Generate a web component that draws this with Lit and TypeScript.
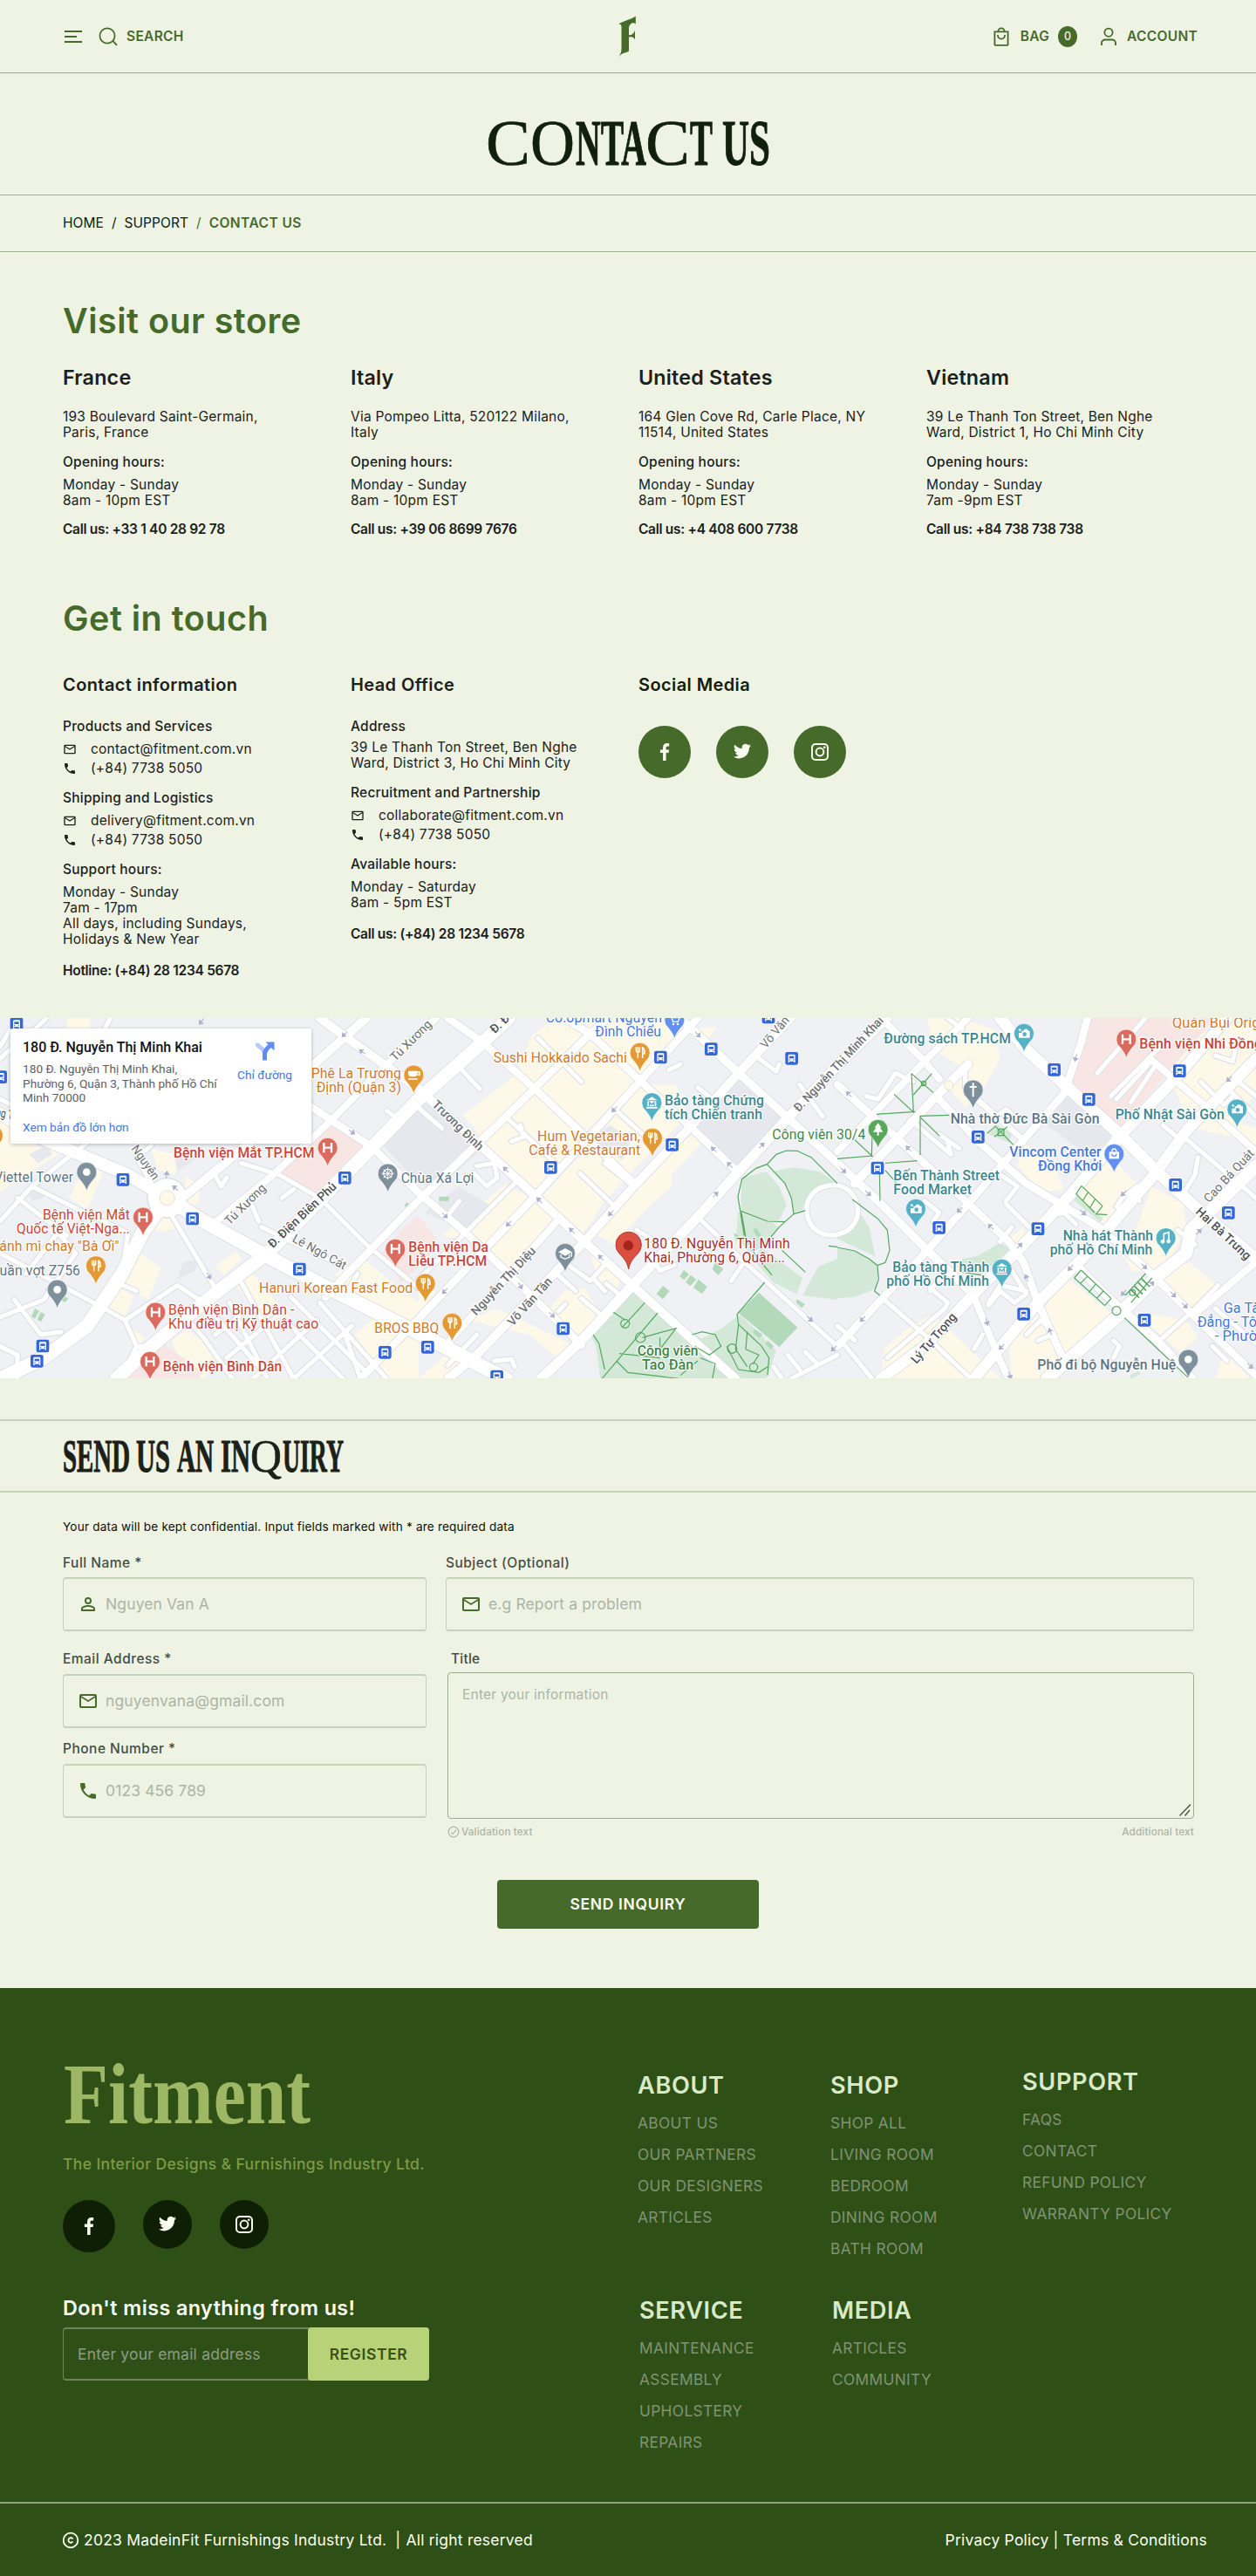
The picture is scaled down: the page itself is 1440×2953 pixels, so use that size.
import { LitElement, html, svg, css, nothing } from "lit";
import { customElement } from "lit/decorators.js";

const icon = {
  menu: svg`<path d="M2 6h20M2 12h14M2 18h20" stroke="currentColor" stroke-width="2"/>`,
  search: svg`<circle cx="11" cy="11" r="8.6" fill="none" stroke="currentColor" stroke-width="1.7"/><path d="M17.4 16.8 22 21.8" stroke="currentColor" stroke-width="1.9"/>`,
  bag: svg`<path d="M4.4 6.4h15.2v14.6a.8.8 0 0 1-.8.8H5.2a.8.8 0 0 1-.8-.8zM8.4 6.2a3.6 3.9 0 0 1 7.2 0M8 10v.6a4 4 0 0 0 8 0V10" fill="none" stroke="currentColor" stroke-width="1.8"/>`,
  account: svg`<circle cx="12" cy="7.2" r="4.6" fill="none" stroke="currentColor" stroke-width="1.8"/><path d="M4 22v-2.5a4 4 0 0 1 4-4h8a4 4 0 0 1 4 4V22" fill="none" stroke="currentColor" stroke-width="1.9"/>`,
  mail: svg`<path d="M20 4H4a2 2 0 0 0-2 2v12a2 2 0 0 0 2 2h16a2 2 0 0 0 2-2V6a2 2 0 0 0-2-2zm0 14H4V8l8 5 8-5zm-8-7L4 6h16z" fill="currentColor"/>`,
  phone: svg`<path d="M6.62 10.79a15.15 15.15 0 0 0 6.59 6.59l2.2-2.2a1 1 0 0 1 1.02-.24c1.12.37 2.33.57 3.57.57a1 1 0 0 1 1 1V20a1 1 0 0 1-1 1A17 17 0 0 1 3 4a1 1 0 0 1 1-1h3.5a1 1 0 0 1 1 1c0 1.25.2 2.45.57 3.57a1 1 0 0 1-.25 1.02z" fill="currentColor"/>`,
  person: svg`<path d="M12 5.9a2.1 2.1 0 1 1 0 4.2 2.1 2.1 0 0 1 0-4.2m0 9c2.97 0 6.1 1.46 6.1 2.1v1.1H5.9V17c0-.64 3.13-2.1 6.1-2.1M12 4a4 4 0 1 0 0 8 4 4 0 0 0 0-8m0 9c-2.67 0-8 1.34-8 4v3h16v-3c0-2.66-5.33-4-8-4" fill="currentColor"/>`,
  facebook: svg`<path d="M13.6 22v-9h3l.5-3.5h-3.5V7.4c0-1 .3-1.8 1.8-1.8h1.8V2.3C16.900 2.200 15.900 2 14.700 2c-2.800 0-4.600 1.700-4.600 4.700v2.800H6.900V13h3.200v9z" fill="currentColor"/>`,
  twitter: svg`<path d="M22 4.800c-.7.3-1.500.6-2.400.7.9-.5 1.500-1.300 1.800-2.300-.8.5-1.700.8-2.600 1A4.100 4.100 0 0 0 11.800 8 11.700 11.700 0 0 1 3.400 3.700a4.100 4.100 0 0 0 1.300 5.500c-.7 0-1.300-.2-1.900-.5v.1c0 2 1.400 3.600 3.300 4a4 4 0 0 1-1.900.1 4.100 4.100 0 0 0 3.900 2.900A8.300 8.300 0 0 1 2 17.500a11.700 11.700 0 0 0 6.300 1.900c7.600 0 11.900-6.400 11.600-12.100.8-.6 1.500-1.500 2.100-2.500z" fill="currentColor"/>`,
  instagram: svg`<rect x="3" y="3" width="18" height="18" rx="4" fill="none" stroke="currentColor" stroke-width="2"/><circle cx="12" cy="12" r="4.400" fill="none" stroke="currentColor" stroke-width="2"/><circle cx="17.200" cy="6.800" r="1.300" fill="currentColor"/>`,
  check: svg`<circle cx="12" cy="12" r="10" fill="none" stroke="currentColor" stroke-width="2"/><path d="m7 12.500 3.400 3.400L17.500 8" fill="none" stroke="currentColor" stroke-width="2"/>`,
  copyright: svg`<circle cx="12" cy="12" r="10" fill="none" stroke="currentColor" stroke-width="2.200"/><path d="M15 10.200A3.300 3.300 0 1 0 15 13.800" fill="none" stroke="currentColor" stroke-width="2.200"/>`,
};

const glyph = (shape: unknown, size = 24) =>
  html`<svg class="glyph" width=${size} height=${size} viewBox="0 0 24 24" fill="none">${shape}</svg>`;

/* ------------------------------------------------------------------ map */

const B = 1440;
const C = 2880;

const palette = {
  red: "#c9453a",
  orange: "#cf7a2c",
  slate: "#5c7585",
  teal: "#3b8791",
  blue: "#4676dc",
  green: "#3c8748",
  wine: "#a52f2a",
  street: "#6c6f74",
  avenue: "#4d5054",
};

type Label = [number, number, number, string, keyof typeof palette, number?, number?];

const labels: Label[] = [
  [1070, 227, 310, "Phê La Trương", "orange"],
  [1088, 275, 292, "Định (Quận 3)", "orange"],
  [597, 501, 485, "Bệnh viện Mắt TP.HCM", "red", 500],
  [-20, 585, 272, "Viettel Tower", "slate"],
  [147, 714, 300, "Bệnh viện Mắt", "red"],
  [57, 763, 390, "Quốc tế Việt-Nga...", "red"],
  [-32, 822, 442, "Bánh mì chay \"Bà Ơi\"", "orange"],
  [-34, 906, 310, "Quần vợt Z756", "slate"],
  [891, 967, 529, "Hanuri Korean Fast Food", "orange"],
  [579, 1042, 433, "Bệnh viện Bình Dân -", "red"],
  [579, 1090, 517, "Khu điều trị Kỹ thuật cao", "red"],
  [1288, 1103, 222, "BROS BBQ", "orange"],
  [560, 1235, 410, "Bệnh viện Bình Dân", "red", 500],
  [1405, 824, 275, "Bệnh viện Da", "red", 500],
  [1405, 873, 270, "Liễu TP.HCM", "red", 500],
  [1379, 588, 251, "Chùa Xá Lợi", "slate"],
  [B + 437, 36, 400, "Co.opmart Nguyễn", "blue"],
  [B + 607, 85, 227, "Đình Chiểu", "blue"],
  [B + 257, 174, 460, "Sushi Hokkaido Sachi", "orange"],
  [B + 846, 322, 342, "Bảo tàng Chứng", "teal", 500],
  [B + 846, 370, 336, "tích Chiến tranh", "teal", 500],
  [B + 408, 444, 354, "Hum Vegetarian,", "orange"],
  [B + 379, 491, 384, "Café & Restaurant", "orange"],
  [B + 1216, 438, 321, "Công viên 30/4", "green"],
  [B + 775, 812, 502, "180 Đ. Nguyễn Thị Minh", "wine"],
  [B + 775, 862, 485, "Khai, Phường 6, Quận...", "wine"],
  [B + 752, 1183, 210, "Công viên", "green", 500],
  [B + 768, 1231, 178, "Tao Đàn", "green", 500],
  [C + 160, 107, 437, "Đường sách TP.HCM", "teal", 500],
  [C + 1039, 127, 422, "Bệnh viện Nhi Đồng", "red", 500],
  [C + 1152, 53, 380, "Quán Bụi Original", "orange"],
  [C + 389, 384, 513, "Nhà thờ Đức Bà Sài Gòn", "slate", 500],
  [C + 956, 368, 376, "Phố Nhật Sài Gòn", "teal", 500],
  [C + 592, 497, 316, "Vincom Center", "blue", 500],
  [C + 690, 545, 220, "Đồng Khởi", "blue", 500],
  [C + 193, 580, 365, "Bến Thành Street", "teal", 500],
  [C + 193, 628, 269, "Food Market", "teal", 500],
  [C + 776, 787, 310, "Nhà hát Thành", "teal", 500],
  [C + 731, 835, 353, "phố Hồ Chí Minh", "teal", 500],
  [C + 190, 893, 333, "Bảo tàng Thành", "teal", 500],
  [C + 169, 941, 353, "phố Hồ Chí Minh", "teal", 500],
  [C + 1328, 1036, 152, "Ga Tàu", "blue"],
  [C + 1238, 1083, 232, "Đẳng - Tôn", "blue"],
  [C + 1298, 1131, 202, "- Phường", "blue"],
  [C + 688, 1229, 477, "Phố đi bộ Nguyễn Huệ", "slate", 500],
];

// x, y, length, text, color, weight, rotation
const streets: Label[] = [
  [450, 470, 135, "Nguyên", "street", 400, 55],
  [790, 735, 180, "Tú Xương", "street", 400, -45],
  [938, 814, 306, "Đ. Điện Biên Phủ", "avenue", 500, -43.5],
  [1003, 788, 205, "Lê Ngô Cát", "street", 400, 29],
  [1360, 172, 180, "Tú Xương", "street", 400, -45],
  [-55, 352, 100, "Hồng T", "avenue", 400, 10],
  [B + 44, 322, 226, "Trương Định", "street", 500, 44],
  [B + 262, 76, 306, "Đ. Điện Biên Phủ", "avenue", 500, -43.5],
  [B + 198, 1046, 304, "Nguyễn Thị Diệu", "street", 500, -47],
  [B + 324, 1082, 206, "Võ Văn Tần", "street", 500, -48],
  [B + 1194, 128, 206, "Võ Văn Tần", "street", 400, -50],
  [B + 1308, 346, 430, "Đ. Nguyễn Thị Minh Khai", "street", 500, -47],
  [C + 1278, 658, 232, "Cao Bá Quát", "street", 400, -47],
  [C + 1230, 690, 242, "Hai Bà Trưng", "avenue", 500, 43],
  [C + 272, 1212, 214, "Lý Tự Trọng", "avenue", 500, -49],
];

const pinColors: Record<string, string> = {
  hospital: "#dc6b5f",
  food: "#e39a34",
  cup: "#e39a34",
  dot: "#7d909c",
  wheel: "#7d909c",
  school: "#7d909c",
  cross: "#7d909c",
  camera: "#55b1c6",
  museum: "#55b1c6",
  music: "#55b1c6",
  tree: "#57a85b",
  shop: "#6290ee",
  cart: "#6290ee",
};

const pinGlyphs: Record<string, unknown> = {
  hospital: svg`<path d="M-13-17v34M13-17v34M-13 0h26" stroke="#fff" stroke-width="7"/>`,
  food: svg`<path d="M-13-19v12a6 6 0 0 0 12 0v-12M-7-19v38M9 19v-36c6 2 7 10 7 20h-7" stroke="#fff" stroke-width="4.500" fill="none"/>`,
  cup: svg`<path d="M-19-14h32v10a12 12 0 0 1-12 10h-8a12 12 0 0 1-12-10z" fill="#fff"/><path d="M13-10h8v9h-9M-19 14h32" stroke="#fff" stroke-width="4" fill="none"/>`,
  dot: svg`<circle r="13" fill="#fff"/>`,
  wheel: svg`<circle r="15" fill="none" stroke="#fff" stroke-width="4"/><path d="M0-21v42M-21 0h42M-15-15l30 30M15-15l-30 30" stroke="#fff" stroke-width="3"/>`,
  school: svg`<path d="M-24-4 0-17 24-4 0 9z" fill="#fff"/><path d="M-15 4v9l15 7 15-7V4M22-3v15" fill="none" stroke="#fff" stroke-width="4"/>`,
  cross: svg`<path d="M0-24v48M-12-10h24" stroke="#fff" stroke-width="6"/>`,
  camera: svg`<path d="M-8-9h6l4-6h9l4 6h5v24h-38V-2h10z" fill="#fff"/><circle cx="2" cy="3" r="7" fill="#55b1c6"/><path d="M-14-17v10M-19-12h10" stroke="#fff" stroke-width="3"/>`,
  museum: svg`<path d="M-19-8 0-20 19-8zM-15-5h30v18h-30zM-19 15h38v5h-38z" fill="#fff"/><path d="M-8 11V-1l8 8 8-8v12" fill="none" stroke="#55b1c6" stroke-width="4"/>`,
  music: svg`<path d="M-7 12v-26l17-5v25" fill="none" stroke="#fff" stroke-width="5"/><circle cx="-11" cy="13" r="7" fill="#fff"/><circle cx="9" cy="12" r="7" fill="#fff"/>`,
  tree: svg`<path d="M0-22 12-6H7L17 9H3v12h-6V9h-14L-7-6h-5z" fill="#fff"/>`,
  shop: svg`<path d="M-17-7h34v24h-34z" fill="#fff"/><path d="M-8-7a8 10 0 0 1 16 0" fill="none" stroke="#fff" stroke-width="4"/><path d="M-8 0a8 8 0 0 0 16 0" fill="none" stroke="#6290ee" stroke-width="4"/>`,
  cart: svg`<path d="M-18-12h6l7 19h17l6-14h-24" fill="none" stroke="#fff" stroke-width="4"/><circle cx="-4" cy="15" r="4" fill="#fff"/><circle cx="11" cy="15" r="4" fill="#fff"/>`,
};

const pins: [string, number, number][] = [
  ["hospital", 1127, 467], ["hospital", 492, 706], ["hospital", 535, 1033], ["hospital", 516, 1202],
  ["hospital", 1360, 815], ["hospital", C + 994, 94],
  ["food", 330, 873], ["food", B + 761, 140], ["food", B + 804, 434], ["food", B + 23, 934],
  ["food", B + 115, 1070], ["cup", 1423, 217], ["food", -24, 425],
  ["dot", 298, 551], ["dot", 197, 955], ["dot", C + 1207, 1195],
  ["wheel", 1334, 556], ["school", B + 504, 830], ["cross", C + 467, 268],
  ["camera", C + 642, 74], ["camera", C + 1375, 334], ["camera", C + 270, 677],
  ["museum", B + 802, 312], ["museum", C + 566, 884], ["music", C + 1130, 777],
  ["tree", C + 140, 404], ["shop", C + 952, 488], ["cart", B + 880, 27],
];

const buses: [number, number][] = [
  [57, 42], [2, 224], [423, 577], [662, 711], [1186, 571], [1030, 885], [147, 1149], [127, 1201], [1324, 1171],
  [B + 832, 156], [B + 1006, 128], [B + 1283, 160], [B + 872, 457], [B + 454, 535], [B + 497, 1089],
  [B + 31, 1153], [B + 269, 1254], [B + 1203, 18],
  [C + 746, 199], [C + 1177, 203], [C + 865, 301], [C + 484, 430], [C + 138, 537], [C + 350, 742],
  [C + 690, 746], [C + 641, 1039], [C + 1056, 1060], [C + 1163, 595], [C + 1345, 691],
];

// x, y, heading in degrees
const arrows: [number, number, number][] = [
  [693, 33, 125], [1185, 77, 135], [1246, 137, 215], [1210, 413, 35], [573, 560, -80], [603, 606, 220], [718, 908, 60],
  [B + 300, 542, 225], [B + 415, 648, 225], [B + 527, 752, 225], [B + 627, 845, 225], [B + 90, 700, 45],
  [B + 310, 728, 133], [B + 90, 960, 133], [B + 350, 942, 60], [B + 458, 1042, 45], [B + 673, 335, 133],
  [B + 661, 692, 133], [B + 1015, 473, 225], [B + 1070, 526, 225], [B + 1180, 459, -47], [B + 1021, 628, -47],
  [B + 960, 78, 45], [B + 1345, 1056, 45], [B + 1428, 1158, 135],
  [C + 40, 283, 225], [C + 20, 545, 45], [C + 106, 624, 45], [C + 245, 470, 225], [C + 820, 158, 105],
  [C + 1348, 231, 133], [C + 985, 624, 133], [C + 845, 690, 45], [C + 421, 681, 133], [C + 528, 739, 225],
  [C + 627, 804, -47], [C + 802, 880, 133], [C + 1055, 875, 45], [C + 1080, 937, -47], [C + 1155, 972, 45],
  [C + 1195, 1010, 45], [C + 1243, 756, -47], [C + 651, 915, 250], [C + 514, 1066, 75], [C + 732, 1100, 250],
  [C + 87, 1056, 133], [C + 565, 1152, 133], [C + 1420, 1218, 45], [C + 593, 1250, 75], [C + 985, 966, 133],
];

const at = (dx: number, d: string) => svg`<path d=${d} transform=${`translate(${dx} 0)`}/>`;

const commercial = [
  [0, "M0 360 60 400 100 455 215 480 120 540 0 620zM520 470 640 500 600 560 540 540zM480 700 610 710 600 745 560 755 480 740zM640 560 690 610 680 660 630 680zM300 500 360 540 300 680 240 640zM440 800 555 880 510 990 405 935zM400 945 460 975 430 1050 350 1010zM740 870 815 825 830 850 770 905zM590 1130 640 1090 760 1180 700 1262 610 1180zM800 925 870 900 1000 1060 940 1100zM1150 900 1250 850 1440 1000 1440 1262 1330 1262 1220 1110 1290 1050zM230 21 310 21 310 60 230 60zM455 1090 500 1120 460 1170z"],
  [B, "M390 80 470 21 930 21 860 110 770 210 720 270 640 345 570 420 500 500 395 615 220 465 195 400 150 355 330 220zM770 250 880 250 920 300 900 380 790 490 640 650 560 770 420 640 640 400zM940 420 970 455 870 560 870 600 780 680 700 770 720 830 640 780 590 760 740 600zM930 60 1030 50 990 100zM300 590 380 640 470 720 360 840 300 900 190 790 80 770zM590 830 700 900 680 960 620 930zM500 960 570 950 630 1050 560 1120 450 1020zM170 1060 270 1020 540 1150 490 1200 380 1110zM0 950 60 960 0 1040zM80 1190 180 1170 100 1262 0 1262z"],
  [C, "M310 21 420 21 540 60 560 160 500 270 440 330 390 270 430 190 330 130zM1090 120 1140 100 1320 60 1440 21 1440 260 1380 400 1260 380 1180 310zM640 450 740 520 780 610 700 620 620 530zM900 510 960 520 1040 600 970 680 920 740 810 610zM1180 310 1440 400 1440 470 1360 430 1220 400zM1080 600 1190 660 1200 740 1120 900 1010 890 970 800 1030 740zM770 900 960 1050 830 1160 700 1262 600 1262 590 1130 720 1010zM1120 900 1210 860 1320 950 1210 1040 1110 960zM1020 1030 1200 1060 1240 1120 1180 1170zM240 1090 330 1040 560 1262 150 1262 160 1160zM1330 1170 1420 1262 1300 1262zM590 780 640 740 650 790 610 820z"],
] as [number, string][];

const minorRoads: [number, string][] = [
  [0, "M0 160 120 60 160 21M0 120 60 21M150 430 60 330 0 300M380 21 360 60M0 720 110 600 260 480 300 450M0 830 190 930 340 1010M110 600 290 690 440 760M60 640 230 770M190 770 90 900M0 1050 150 990 260 830M260 830 200 760M50 990 140 1110 210 1100M440 760 420 900M400 930 470 960M340 1010 430 1060 610 940 700 1000M430 1060 470 1150 440 1210M470 1150 530 1150M520 590 470 500 520 460M590 700 740 950M630 1040 700 1120 800 1262M700 1000 900 1230M790 1000 920 1262M830 930 1010 1262M740 1110 830 1040M780 1190 960 1040M870 1262 1090 1060M1010 1262 1210 1080M940 1020 1180 1262M1000 980 1260 1240M1100 1000 1330 1262M1180 1090 1240 1262M740 560 760 600 780 570M970 640 1010 610M860 650 890 720M900 740 1210 890M1180 990 1230 900M1330 340 1370 370M830 520 960 560 1100 640 1260 800 1440 950M0 1150 60 1180 60 1262"],
  [B, "M410 90 560 240M300 360 480 530M140 190 210 265M350 390 360 430 320 445M640 520 740 600M555 555 670 665M680 340 770 420M860 200 900 180M960 260 1010 300M1170 160 1230 205 1240 180M1310 250 1390 360M200 530 260 520 270 570 235 600 190 555M480 905 540 960M500 860 590 925 640 870M600 915 640 960M560 985 630 1045M480 1030 505 1005M645 935 700 980M750 750 830 800M800 840 830 890 880 870M960 705 1120 860 1440 1150M1120 860 1075 925M100 1215 200 1110M260 1200 320 1195 330 1220M1220 1220 1250 1262M1270 1180 1310 1230M1330 1170 1370 1210M1440 1180 1280 1262M140 650 100 700M330 590 0 920M0 330 80 400"],
  [C, "M100 290 140 300 200 210 260 240M380 21 430 60M440 200 440 260M250 370 390 490 380 450M350 420 420 470M580 660 660 740M560 560 620 600 580 650M600 740 560 790M300 650 350 690 330 720M360 900 320 960M320 950 380 1000 370 1020 170 1190M500 1110 470 1160M600 890 650 970 610 1000 560 960 520 1010M650 960 560 940 520 1000M650 1110 700 1060 720 1080M690 1130 740 1110M150 980 300 1110 460 1262M60 1130 0 1080M20 1140 120 1262M895 210 1060 21M940 290 1110 120M960 300 1080 170M1010 310 1090 190M1250 240 1330 320 1360 290M1300 150 1360 170 1370 120M1120 390 1180 440M1180 420 1440 640M1240 500 1230 560 1200 610M960 670 980 640 1030 600 1080 590M1010 630 1040 650M820 730 780 690 740 700M1120 1120 1210 1040 1310 940M1290 1150 1340 1200M950 1130 970 1150 950 1190M1300 1020 1440 1140M1170 750 1230 800M1380 240 1440 290M1350 270 1440 360M560 350 580 335 600 350"],
];

const roads: [number, number, string][] = [
  [26, 0, "M1060 320 1280 465 1440 622 1605 762 1790 940 2000 1145"],
  [24, 0, "M720 740 940 560 1140 372 1260 250 1440 75 1500 21"],
  [26, 0, "M1120 980 1200 895 1440 648 1740 360 2030 75 2090 21"],
  [26, 0, "M1240 1262 1440 1055 1835 640 2200 240 2400 21"],
  [24, B, "M90 1150 480 715"],
  [26, B, "M100 21 220 105 395 260 560 415 740 590"],
  [26, B, "M500 21 590 75 760 235 935 395 1090 545"],
  [30, B, "M100 1262 200 1180 570 790 740 600 935 395 1100 210 1280 21"],
  [30, 0, "M1100 21 1180 80 1440 265 1840 632 2010 790 2175 940 2530 1262"],
  [28, B, "M900 21 1100 210 1265 360 1440 520 1590 660 1750 820 1910 975"],
  [34, B, "M420 1262 560 1130 735 940 960 705 1090 560 1265 370 1440 185 1610 21"],
  [24, C, "M0 480 290 180 450 21"],
  [30, C, "M60 590 210 430 330 300 450 180"],
  [24, C, "M150 21 290 160 350 230"],
  [26, C, "M0 250 200 430 440 650 590 790 640 860 690 1000 780 1200"],
  [26, C, "M350 300 490 450 650 590 900 740 1060 880 1220 1040 1440 1250"],
  [20, C, "M480 300 640 440"],
  [26, C, "M0 1150 310 820 450 660 780 280 840 100 860 21"],
  [38, C, "M150 1262 300 1150 470 970 640 800 800 630 970 430 1180 210 1340 21"],
  [38, C, "M470 1262 690 1000 840 850 1090 560 1200 410 1440 160"],
  [44, C, "M720 1262 960 1050 1110 900 1200 830 1215 750 1440 530"],
  [30, C, "M820 870 950 1000 1100 1130 1220 1262"],
  [24, C, "M1080 165 1250 310 1440 480"],
  [24, C, "M470 980 560 1200 590 1262"],
  [24, C, "M1240 1030 1440 860"],
  [40, C, "M560 21 650 130 790 258 970 420 1090 540 1230 670 1440 850"],
  [30, 0, "M640 630 870 440 1075 185 1260 21"],
  [42, 0, "M575 640 440 560 250 480 130 430 0 350"],
  [46, 0, "M400 1262 520 1150 750 960 920 830 1280 465 1440 300 1660 105 1750 21"],
  [48, 0, "M575 640 700 720 900 830 1100 935 1440 1105 1740 1262"],
  [48, 0, "M575 640 490 760 420 900 300 1080 150 1190 0 1262"],
];

const parkPaths: [number, string][] = [
  [B, "M670 1033 710 1060M778 1000 700 1085M822 1035 630 1262M600 1110 620 1140 640 1230M690 1175 830 1190M680 1200 720 1240 900 1262M770 1120 885 1088 830 1160 830 1120M940 1110 975 1100 1020 1110 1040 1150 1000 1180 950 1150M1190 930 1095 1040 1100 1075 1180 1150 1205 1190 1200 1250M1100 1075 1090 1160 1130 1220M1130 1100 1125 1160 1170 1180 1150 1210M1060 1150 1100 1230 1170 1240 1200 1220M970 1190 1020 1210 1010 1262M900 1250 960 1200M1108 685 1200 720 1260 722M1120 770 1098 635 1112 575 1160 538 1198 524 1230 490 1265 477 1302 478 1350 500 1440 590M1198 524 1260 590 1282 640 1290 695 1330 683M1290 695 1240 740 1190 800M1110 690 1125 775 1160 840 1215 905M1250 820 1330 895M1410 805 1440 808"],
  [C, "M0 810 60 822 110 850 138 872 142 920 128 960 146 975M138 872 165 862 180 820 172 750 140 712 52 645M255 212 330 278M325 212 262 285M255 212 262 345 195 283M135 352 268 343M385 355 285 358 285 492M285 362 352 427M120 420 118 495 0 505M60 440 122 498M165 520 275 512M145 550 147 650M165 545 205 590M515 418 545 392M545 395 605 457M585 395 540 430M553 403h20v22h-20zM840 598 912 668M820 625 885 690M840 598 822 625M912 668 890 695 928 698M863 620 845 648M887 643 870 672M838 888 942 985M815 915 920 1010M838 888 815 915M942 985 920 1010M862 908 835 935M890 935 865 965M915 960 892 985M1060 900 990 975M1082 915 1010 1000M988 1052 1207 1258M430 895 495 905"],
];

@customElement("city-map")
class CityMap extends LitElement {
  static styles = css`
    :host { display: block; }
    .canvas { display: block; width: 100%; height: 100%; background: #eff1f4; }
    text { font-family: Roboto, "Liberation Sans", sans-serif; font-size: 49px; paint-order: stroke; stroke: #fff; stroke-width: 7px; stroke-linejoin: round; }
    .street { font-size: 42px; stroke-width: 8px; }
  `;

  private label([x, y, w, t, color, weight = 400, turn]: Label) {
    return svg`<text class=${turn === undefined ? "place" : "street"} x=${x} y=${y} textLength=${w}
      lengthAdjust="spacingAndGlyphs" fill=${palette[color]} font-weight=${weight}
      transform=${turn === undefined ? nothing : `rotate(${turn} ${x} ${y})`}>${t}</text>`;
  }

  render() {
    return html`<svg class="canvas" viewBox="0 21 4320 1239" preserveAspectRatio="none">
      <g fill="#fdf8e8">${commercial.map(([dx, d]) => at(dx, d))}</g>
      <g fill="#e7e8ed">
        ${at(B, "M1095 225 1255 360 1090 535 940 390zM0 320 40 310 210 480 60 610 0 590zM70 650 140 600 245 665 165 750 20 690zM600 420 660 390 730 440 700 510 620 460z")}
        ${at(C, "M790 290 945 425 870 500 715 385z")}
        ${at(0, "M1440 300 1300 440 1440 590zM600 500 650 470 680 500 610 550zM90 610 140 590 150 640 110 650zM630 860 690 850 670 890 610 920zM100 490 160 460 180 490 130 520z")}
      </g>
      <g fill="#f8e6e4">
        ${at(0, "M1140 385 1270 465 1085 630 960 550zM1310 830 1390 740 1440 700 1500 780 1470 850 1380 930zM500 1200 560 1140 700 1240 680 1262 430 1262z")}
        ${at(C, "M865 21 1300 21 1160 180 970 405 795 255z")}
      </g>
      <g fill="#d3e8d7">
        ${at(B, "M735 960 1010 1150 1120 1262 625 1262 610 1150 590 1110zM1040 1090 1105 1040 1230 1165 1195 1262 1110 1262 960 1130zM1112 570 1195 550 1240 600 1265 665 1240 715 1200 718 1108 683zM1215 548 1290 535 1380 550 1430 585 1335 640 1320 680 1290 690 1270 600zM1098 690 1215 722 1240 745 1180 810 1140 830 1092 770zM1180 810 1320 915 1300 970 1220 930 1150 850zM1375 875 1440 850 1440 990 1320 975z")}
        ${at(C, "M70 680 110 740 130 840 0 780 0 760zM0 812 60 824 120 858 140 880 135 950 60 980 0 985zM545 385 600 420 590 450 520 420zM820 630 915 710 905 722 815 650zM430 850 480 840 560 795 595 815 500 900 430 890zM1005 1250 1035 1235 1045 1245 1010 1262z")}
      </g>
      <g fill="#b2d9b9">
        ${at(B, "M1170 965 1303 1085 1240 1152 1100 1035zM840 942 863 960 840 988 818 970zM912 888 930 902 913 922 898 910zM935 905 955 920 935 942 918 930zM962 920 992 945 975 970 945 948zM1085 760 1105 775 1090 790zM1160 740 1180 770 1165 775 1150 750zM1300 988 1328 1005 1318 1018 1298 1000zM1155 1090 1183 1110 1172 1122 1150 1103zM1200 1130 1222 1150 1212 1160 1192 1142zM1020 860 1048 885 1030 905 1010 885zM70 635h34v15h-34z")}
        ${at(0, "M215 975 235 985 225 998 205 990zM120 1020 135 1028 120 1055 108 1048zM140 1033 155 1040 142 1065 128 1058zM1400 655 1416 668 1404 678 1390 665zM155 950 165 955 160 967z")}
      </g>
      <g fill="none" stroke-linecap="round" stroke-linejoin="round">
        <g stroke="#dfe0e6" stroke-width="22">${minorRoads.map(([dx, d]) => at(dx, d))}</g>
        ${roads.map(([w, dx, d]) => svg`<path d=${d} transform=${`translate(${dx} 0)`} stroke="#dcdde4" stroke-width=${w + 5}/>`)}
        <circle cx="575" cy="640" r="68" fill="#fff" stroke="#dcdde4" stroke-width="4"/>
        <g stroke="#fff" stroke-width="15">${minorRoads.map(([dx, d]) => at(dx, d))}</g>
        ${roads.map(([w, dx, d]) => svg`<path d=${d} transform=${`translate(${dx} 0)`} stroke="#fff" stroke-width=${w}/>`)}
        <circle cx="575" cy="640" r="26" fill="#fdf8e8" stroke="#e4e2d8" stroke-width="3"/>
        <circle cx="3263" cy="253" r="16" fill="#fdf8e8" stroke="#e4e2d8" stroke-width="3"/>
        <rect x="2775" y="597" width="175" height="170" rx="82" fill="#eff1f4" stroke="#dcdde4" stroke-width="21" transform="rotate(-12 2862 682)"/>
        <rect x="2775" y="597" width="175" height="170" rx="82" stroke="#fff" stroke-width="16" transform="rotate(-12 2862 682)"/>
      </g>
      <g fill="none" stroke="#52a75e" stroke-width="3.500">
        ${parkPaths.map(([dx, d]) => at(dx, d))}
        <circle cx="2150" cy="1072" r="15"/><circle cx="2203" cy="1120" r="17"/><circle cx="2518" cy="1158" r="16"/>
        <circle cx="2592" cy="1222" r="14"/><circle cx="3840" cy="1028" r="15"/>
        <path d="M3890 955l28 28M3902 943l28 28M3914 930l28 28M3926 917l28 28" stroke-width="5"/>
        <circle cx="3895" cy="965" r="10"/><circle cx="3177" cy="246" r="8"/>
      </g>
      ${arrows.map(([x, y, r]) => svg`<path d="M-13 0h20M1-8 12 0 1 8z" fill="#adafcc" stroke="#adafcc" stroke-width="3" transform=${`translate(${x} ${y}) rotate(${r})`}/>`)}
      ${buses.map(([x, y]) => svg`<g transform=${`translate(${x} ${y})`}>
        <rect x="-22" y="-22" width="44" height="44" rx="7" fill="#3367d6"/>
        <path d="M-12-10q0-4 4-4H8q4 0 4 4V14H8V10H-8v4h-4z" fill="#fff"/>
        <path d="M-8-8H8v8H-8z" fill="#3367d6"/><circle cx="-7" cy="5" r="2" fill="#3367d6"/><circle cx="7" cy="5" r="2" fill="#3367d6"/>
      </g>`)}
      ${streets.map((s) => this.label(s))}
      ${pins.map(([kind, x, y]) => svg`<g transform=${`translate(${x} ${y})`}>
        <path d="M0 65C-4 50-12 40-22 27A34.500 34.500 0 1 1 22 27C12 40 4 50 0 65z" fill=${pinColors[kind]} stroke="#fff" stroke-width="2"/>
        ${pinGlyphs[kind]}
      </g>`)}
      <path d="M2162 885C2158 862 2148 850 2131 832A44 44 0 1 1 2193 832C2176 850 2166 862 2162 885z" fill="#d94f40" stroke="#b23a30" stroke-width="3"/>
      <circle cx="2161" cy="803" r="17" fill="#a3261c"/>
      ${labels.map((l) => this.label(l))}
    </svg>`;
  }
}

/* ----------------------------------------------------------------- page */

interface Store { name: string; address: string[]; hours: string; phone: string }

const stores: Store[] = [
  { name: "France", address: ["193 Boulevard Saint-Germain,", "Paris, France"], hours: "8am - 10pm EST", phone: "+33 1 40 28 92 78" },
  { name: "Italy", address: ["Via Pompeo Litta, 520122 Milano,", "Italy"], hours: "8am - 10pm EST", phone: "+39 06 8699 7676" },
  { name: "United States", address: ["164 Glen Cove Rd, Carle Place, NY", "11514, United States"], hours: "8am - 10pm EST", phone: "+4 408 600 7738" },
  { name: "Vietnam", address: ["39 Le Thanh Ton Street, Ben Nghe", "Ward, District 1, Ho Chi Minh City"], hours: "7am -9pm EST", phone: "+84 738 738 738" },
];

const footerNav: { title: string; links: string[]; mod: string }[] = [
  { title: "ABOUT", links: ["ABOUT US", "OUR PARTNERS", "OUR DESIGNERS", "ARTICLES"], mod: "" },
  { title: "SHOP", links: ["SHOP ALL", "LIVING ROOM", "BEDROOM", "DINING ROOM", "BATH ROOM"], mod: "" },
  { title: "SUPPORT", links: ["FAQS", "CONTACT", "REFUND POLICY", "WARRANTY POLICY"], mod: "raised" },
  { title: "SERVICE", links: ["MAINTENANCE", "ASSEMBLY", "UPHOLSTERY", "REPAIRS"], mod: "inset" },
  { title: "MEDIA", links: ["ARTICLES", "COMMUNITY"], mod: "inset" },
];

// A run of display lettering: text, left edge, drawn width, round letters are drawn lighter.
type Run = [string, number, number, boolean];

const heroRuns: Run[] = [
  ["C", -1, 51, true],
  ["O", 50, 51, true],
  ["NTA", 102, 81, false],
  ["C", 182, 51, true],
  ["T", 233, 26, false],
  ["US", 270, 55, false],
];

const inquiryRuns: Run[] = [
  ["SEND", 0, 77, false],
  ["US", 84, 39, false],
  ["AN", 131, 42, false],
  ["IN", 181, 34, false],
  ["Q", 215, 36, true],
  ["UIRY", 252, 70, false],
];

@customElement("app-root")
class AppRoot extends LitElement {
  static styles = css`
    :host { display: block; width: 1440px; height: 2953px; overflow: hidden; background: #eff3e4; color: #1b211a;
      font-family: Inter, "Liberation Sans", sans-serif; font-size: 15.500px; line-height: 18px; letter-spacing: 0.22px; }
    * { box-sizing: border-box; margin: 0; }
    .glyph { display: block; flex: none; }
    .top { display: flex; align-items: center; justify-content: space-between; height: 84px; padding: 0 67px 0 72px;
      border-bottom: 1px solid #9cae90; color: #466a2a; font-weight: 600; letter-spacing: 0.300px; }
    .side { display: flex; align-items: center; width: 306px; }
    .side.end { justify-content: flex-end; }
    .mark { display: block; margin-right: 7px; }
    .search { margin: 0 9px 0 16px; }
    .bag-label { margin: 0 10px; }
    .count { display: grid; place-items: center; width: 22px; height: 24px; border-radius: 50%; background: #466a2a;
      color: #eff3e4; font-size: 12.500px; font-weight: 500; letter-spacing: 0; margin-right: 24px; }
    .account { margin-right: 9px; }
    .hero { height: 140px; padding-top: 53px; border-bottom: 1px solid #9cae90; }
    .wordmark { display: block; overflow: visible; }
    .hero .wordmark { margin: 0 auto; }
    .display { font-family: "Liberation Serif", serif; font-weight: 700; letter-spacing: 0; }
    .round { font-weight: 400; stroke: currentColor; stroke-width: 0.600px; }
    .narrow { stroke: currentColor; stroke-width: 1px; }
    .dark { color: #10200a; fill: currentColor; }
    .ink { color: #1b211a; fill: currentColor; }
    .crumbs { display: flex; align-items: center; gap: 9px; height: 65px; padding-left: 72px; border-bottom: 1px solid #9cae90; color: #10200a; letter-spacing: 0.050px; }
    .here { color: #466a2a; }
    b.here { font-weight: 600; letter-spacing: 0.450px; }
    .content { padding: 55px 0 45px 72px; }
    .title { font-size: 39.500px; line-height: 48px; font-weight: 600; color: #466a2a; letter-spacing: 0.480px; }
    .title.second { margin-top: 69px; }
    .quad { display: grid; grid-template-columns: repeat(4, 330px); }
    .stores { margin-top: 27px; }
    .name { font-size: 23.300px; line-height: 28px; font-weight: 600; letter-spacing: 0.200px; margin-bottom: 22px; }
    .sub { font-weight: 500; margin: 16px 0 8px; }
    .call { font-weight: 600; letter-spacing: -0.300px; margin-top: 15px; }
    .touch { margin-top: 40px; }
    .group { font-size: 20px; line-height: 24px; font-weight: 600; margin-bottom: 27px; letter-spacing: 0.400px; }
    .social-col .group { margin-bottom: 35px; color: #10200a; }
    .touch .sub { margin: 14px 0 6px; }
    .touch .sub.lead { margin-top: 0; }
    .touch .sub.wide { margin-top: 16px; }
    .touch .sub.hours { margin-bottom: 8px; }
    .touch .call { margin-top: 18px; }
    .row { display: flex; align-items: center; gap: 16px; height: 22px; }
    .social { display: flex; gap: 29px; }
    .disc { display: grid; place-items: center; width: 60px; height: 60px; border-radius: 50%; background: #466a2a; color: #f9fdf0; }
    .map { position: relative; height: 413px; }
    .map city-map { height: 413px; }
    .place { position: absolute; left: 12px; top: 12px; display: flex; justify-content: space-between; width: 345px; height: 132px;
      padding: 12px 22px 0 14px; background: #fff; border-radius: 2px; box-shadow: 0 1px 4px rgba(0, 0, 0, 0.250);
      font-family: Roboto, "Liberation Sans", sans-serif; letter-spacing: 0; }
    .place-name { font-size: 16px; line-height: 20px; font-weight: 500; color: #111; }
    .place-address { margin-top: 6px; font-size: 13.700px; line-height: 16.700px; color: #5f6063; }
    .link { color: #4178dc; font-size: 13.700px; line-height: 16px; }
    .bigger { margin-top: 17px; }
    .route { display: flex; flex-direction: column; align-items: center; gap: 8px; padding-top: 3px; }
    .banner { height: 84px; margin-top: 47px; padding: 21px 0 0 72px; border: solid #c7d2bc; border-width: 2px 0; }
    .form { padding: 30px 72px 68px; }
    .note { font-size: 13.600px; color: #0c0f0a; letter-spacing: 0.180px; }
    .fields { display: grid; grid-template-columns: 417px 858px; gap: 22px; margin-top: 24px; }
    .label { display: block; font-weight: 500; color: #474d43; letter-spacing: 0.480px; }
    .input { display: flex; align-items: center; gap: 8px; height: 62px; margin-top: 7px; padding-left: 16px; border: 2px solid #c7d2bc;
      border-width: 2px 1.500px; border-radius: 4px; color: #466a2a; }
    .later { margin-top: 23px; }
    .later + .input, .close + .input { margin-top: 8px; }
    .close { margin-top: 15px; }
    .hint { font-size: 17.500px; color: #adb5a4; letter-spacing: 0.120px; }
    .area-label { padding-left: 6px; letter-spacing: 0.200px; }
    .area { display: flex; justify-content: space-between; height: 168px; margin: 6px 0 0 2px; padding: 16px 2px 2px 16px;
      border: 1px solid #9cae90; border-radius: 4px; }
    .area .hint { font-size: 15.500px; letter-spacing: 0.220px; }
    .grip { align-self: flex-end; display: block; }
    .help { display: flex; align-items: center; gap: 2px; margin: 7px 0 0 2px; font-size: 11.700px; line-height: 16px; font-weight: 500; color: #adb5a4; letter-spacing: 0.150px; }
    .extra { margin-left: auto; }
    .send { display: block; width: 300px; height: 56px; margin: 47px auto 0; border: 0; border-radius: 4px; background: #466a2a; color: #fbfff2;
      font: 600 17.500px/22px Inter, sans-serif; letter-spacing: 0.650px; }
    .foot { height: 674px; background: #2e5016; color: #fbfff2; }
    .foot-main { display: flex; height: 589px; padding: 81px 0 0 72px; }
    .brand { width: 659px; }
    .tagline { margin-top: 30px; font-size: 17.500px; line-height: 22px; font-weight: 500; color: #7e9a45; letter-spacing: 0.370px; }
    .foot .social { gap: 32px; margin-top: 30px; height: 60px; }
    .foot .disc { width: 56px; height: 56px; background: #0f1f05; }
    .foot .disc.big { width: 60px; height: 60px; }
    .news { margin-top: 50px; font-size: 23.300px; line-height: 28px; font-weight: 600; letter-spacing: 0.440px; }
    .signup { display: flex; width: 420px; height: 61px; margin-top: 8px; border: 2px solid #6c8659; border-width: 2px 0 2px 1.500px; border-radius: 4px; }
    .mail-hint { flex: 1; display: flex; align-items: center; padding-left: 16px; font-size: 17.500px; color: #8d9c82; letter-spacing: 0.200px; }
    .register { width: 139px; height: 61px; margin-top: -2px; border: 0; border-radius: 4px; background: #b7d279; color: #3b5015;
      font: 600 17.500px/22px Inter, sans-serif; letter-spacing: 0.600px; }
    .nav { display: grid; grid-template-columns: 221px 220px 220px; grid-template-rows: 222px auto; row-gap: 36px; padding-top: 14px; }
    .nav-title { font-size: 27.200px; line-height: 34px; font-weight: 600; color: #d9eac9; letter-spacing: 0.600px; margin-bottom: 8px; }
    .raised { margin-top: -4px; }
    .inset { padding-left: 2px; }
    .item { font-size: 17.300px; line-height: 36px; color: #809374; letter-spacing: 0.360px; }
    .legal { display: flex; align-items: center; height: 85px; padding: 0 56px 0 71px; border-top: 2px solid #8fa67c; font-size: 17.500px; letter-spacing: 0.220px; }
    .legal .glyph { margin-right: 5px; }
    .gap { margin: 0 6px 0 10px; }
    .policy { margin-left: auto; }
  `;

  private contactRows(mail: string) {
    return html`<div class="row">${glyph(icon.mail, 16)}<span>${mail}</span></div>
      <div class="row">${glyph(icon.phone, 16)}<span>(+84) 7738 5050</span></div>`;
  }

  private lines(list: string[]) {
    return list.map((l) => html`<div>${l}</div>`);
  }

  private runs(list: Run[]) {
    return list.map(([t, x, w, round]) => svg`<tspan class=${round ? "round" : "narrow"} x=${x} textLength=${w} lengthAdjust="spacingAndGlyphs">${t}</tspan>`);
  }

  private socials(first = "") {
    return html`<div class="social">
      <a class="disc ${first}">${glyph(icon.facebook, 24)}</a>
      <a class="disc">${glyph(icon.twitter, 24)}</a>
      <a class="disc">${glyph(icon.instagram, 24)}</a>
    </div>`;
  }

  private store(s: Store) {
    return html`<article>
      <h3 class="name">${s.name}</h3>
      ${this.lines(s.address)}
      <h4 class="sub">Opening hours:</h4>
      ${this.lines(["Monday - Sunday", s.hours])}
      <p class="call">Call us: ${s.phone}</p>
    </article>`;
  }

  render() {
    return html`
      <header class="top">
        <div class="side">${glyph(icon.menu)}<span class="search">${glyph(icon.search)}</span>SEARCH</div>
        <svg class="mark" width="22" height="47" viewBox="0 0 22 47" fill="#466a2a">
          <path d="M1.500 9.600C6 5.500 15 5 20.800.4V9.600C18.500 7 14.500 8 13 13V22.300C16 22.600 19 20.500 20 16.500V27.500C18.500 23.500 15.500 24 13 24.500V40.500C12 42.500 6 41.500 1 47C3.500 43.500 4.500 42 4.500 38V13C4.500 10.500 3.500 10 1.500 9.600z"/>
        </svg>
        <div class="side end">${glyph(icon.bag)}<span class="bag-label">BAG</span><span class="count">0</span><span class="account">${glyph(icon.account)}</span>ACCOUNT</div>
      </header>

      <section class="hero">
        <svg class="wordmark" width="324" height="60" viewBox="0 0 324 60" role="heading">
          <text class="display dark" y="52" font-size="73">${this.runs(heroRuns)}</text>
        </svg>
      </section>

      <nav class="crumbs"><span>HOME</span><span>/</span><span>SUPPORT</span><span class="here">/</span><b class="here">CONTACT US</b></nav>

      <main class="content">
        <h2 class="title">Visit our store</h2>
        <div class="quad stores">${stores.map((s) => this.store(s))}</div>

        <h2 class="title second">Get in touch</h2>
        <div class="quad touch">
          <div>
            <h3 class="group">Contact information</h3>
            <h4 class="sub lead">Products and Services</h4>
            ${this.contactRows("contact@fitment.com.vn")}
            <h4 class="sub">Shipping and Logistics</h4>
            ${this.contactRows("delivery@fitment.com.vn")}
            <h4 class="sub hours">Support hours:</h4>
            ${this.lines(["Monday - Sunday", "7am - 17pm", "All days, including Sundays,", "Holidays & New Year"])}
            <p class="call">Hotline: (+84) 28 1234 5678</p>
          </div>
          <div>
            <h3 class="group">Head Office</h3>
            <h4 class="sub lead">Address</h4>
            ${this.lines(["39 Le Thanh Ton Street, Ben Nghe", "Ward, District 3, Ho Chi Minh City"])}
            <h4 class="sub wide">Recruitment and Partnership</h4>
            ${this.contactRows("collaborate@fitment.com.vn")}
            <h4 class="sub hours">Available hours:</h4>
            ${this.lines(["Monday - Saturday", "8am - 5pm EST"])}
            <p class="call">Call us: (+84) 28 1234 5678</p>
          </div>
          <div class="social-col">
            <h3 class="group">Social Media</h3>
            ${this.socials()}
          </div>
        </div>
      </main>

      <section class="map">
        <city-map></city-map>
        <div class="place">
          <div>
            <p class="place-name">180 Đ. Nguyễn Thị Minh Khai</p>
            <p class="place-address">180 Đ. Nguyễn Thị Minh Khai,<br>Phường 6, Quận 3, Thành phố Hồ Chí<br>Minh 70000</p>
            <p class="link bigger">Xem bản đồ lớn hơn</p>
          </div>
          <div class="route">
            <svg width="22" height="22" viewBox="0 0 22 22" fill="none">
              <path d="M1 1.500c0 4 8 5 9 11" stroke="#b9cbf8" stroke-width="5"/>
              <path d="M10.500 21.500V14c0-4 3-6.500 6.500-9.500" stroke="#5f8cf3" stroke-width="5"/>
              <path d="M11.500.5H21.500V10.500z" fill="#5f8cf3"/>
            </svg>
            <span class="link">Chỉ đường</span>
          </div>
        </div>
      </section>

      <section class="banner">
        <svg class="wordmark" width="322" height="44" viewBox="0 0 322 44" role="heading">
          <text class="display ink" y="36.500" font-size="52">${this.runs(inquiryRuns)}</text>
        </svg>
      </section>

      <section class="form">
        <p class="note">Your data will be kept confidential. Input fields marked with * are required data</p>
        <div class="fields">
          <div>
            <label class="label">Full Name *</label>
            <div class="input">${glyph(icon.person)}<span class="hint">Nguyen Van A</span></div>
            <label class="label later">Email Address *</label>
            <div class="input">${glyph(icon.mail)}<span class="hint">nguyenvana@gmail.com</span></div>
            <label class="label close">Phone Number *</label>
            <div class="input">${glyph(icon.phone)}<span class="hint">0123 456 789</span></div>
          </div>
          <div>
            <label class="label">Subject (Optional)</label>
            <div class="input">${glyph(icon.mail)}<span class="hint">e.g Report a problem</span></div>
            <label class="label later area-label">Title</label>
            <div class="area">
              <span class="hint">Enter your information</span>
              <svg class="grip" width="14" height="14" viewBox="0 0 14 14"><path d="M.5 13.500 13 .5M6.500 13.500 12 7" stroke="#474d43" stroke-width="1.300"/></svg>
            </div>
            <div class="help">${glyph(icon.check, 14)}<span>Validation text</span><span class="extra">Additional text</span></div>
          </div>
        </div>
        <button class="send">SEND INQUIRY</button>
      </section>

      <footer class="foot">
        <div class="foot-main">
          <div class="brand">
            <svg class="wordmark" width="284" height="80" viewBox="0 0 284 80">
              <text class="display" x="1" y="74" font-size="100" fill="#9db765" textLength="283" lengthAdjust="spacingAndGlyphs">Fitment</text>
            </svg>
            <p class="tagline">The Interior Designs &amp; Furnishings Industry Ltd.</p>
            ${this.socials("big")}
            <p class="news">Don't miss anything from us!</p>
            <div class="signup"><span class="mail-hint">Enter your email address</span><button class="register">REGISTER</button></div>
          </div>
          <nav class="nav">
            ${footerNav.map((c) => html`<div class=${c.mod}>
              <h3 class="nav-title">${c.title}</h3>
              ${c.links.map((l) => html`<div class="item">${l}</div>`)}
            </div>`)}
          </nav>
        </div>
        <div class="legal">${glyph(icon.copyright, 20)}<span>2023 MadeinFit Furnishings Industry Ltd.</span><span class="gap">|</span><span>All right reserved</span>
          <span class="policy">Privacy Policy | Terms &amp; Conditions</span></div>
      </footer>
    `;
  }
}
